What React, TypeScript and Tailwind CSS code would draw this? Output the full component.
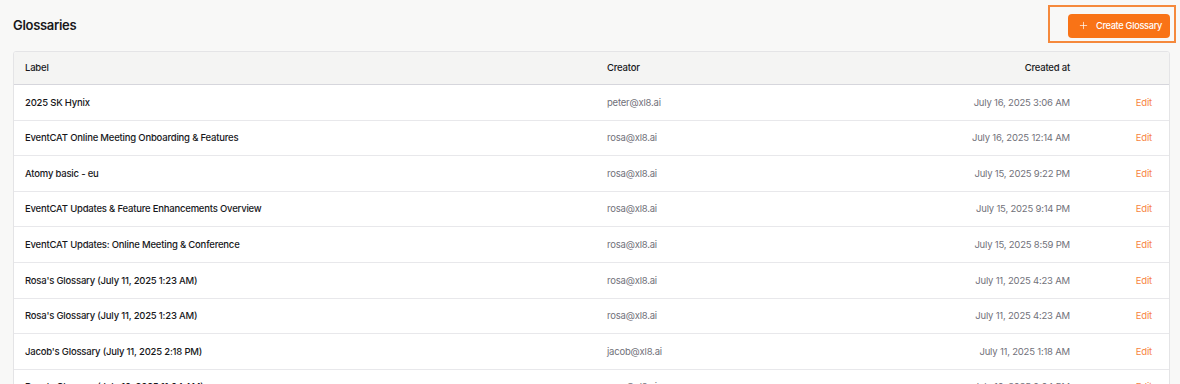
import { Plus } from "lucide-react";

interface Glossary {
  label: string;
  creator: string;
  createdAt: string;
}

const ROWS: Glossary[] = [
  { label: "2025 SK Hynix", creator: "peter@xl8.ai", createdAt: "July 16, 2025 3:06 AM" },
  { label: "EventCAT Online Meeting Onboarding & Features", creator: "rosa@xl8.ai", createdAt: "July 16, 2025 12:14 AM" },
  { label: "Atomy basic - eu", creator: "rosa@xl8.ai", createdAt: "July 15, 2025 9:22 PM" },
  { label: "EventCAT Updates & Feature Enhancements Overview", creator: "rosa@xl8.ai", createdAt: "July 15, 2025 9:14 PM" },
  { label: "EventCAT Updates: Online Meeting & Conference", creator: "rosa@xl8.ai", createdAt: "July 15, 2025 8:59 PM" },
  { label: "Rosa's Glossary (July 11, 2025 1:23 AM)", creator: "rosa@xl8.ai", createdAt: "July 11, 2025 4:23 AM" },
  { label: "Rosa's Glossary (July 11, 2025 1:23 AM)", creator: "rosa@xl8.ai", createdAt: "July 11, 2025 4:23 AM" },
  { label: "Jacob's Glossary (July 11, 2025 2:18 PM)", creator: "jacob@xl8.ai", createdAt: "July 11, 2025 1:18 AM" },
  { label: "Rosa's Glossary (July 10, 2025 11:04 AM)", creator: "rosa@xl8.ai", createdAt: "July 10, 2025 9:04 PM" },
];

export default function App() {
  return (
    <div className="h-[384px] w-[1180px] overflow-hidden bg-[#f8f8f7] font-['Inter','Liberation_Sans',sans-serif] text-[#18181b]">
      <div className="relative flex h-[51px] items-center justify-between pl-[13px] pr-[10px]">
        <h1 className="text-[13px] font-semibold tracking-[-0.3px]">Glossaries</h1>
        <button className="flex h-[24px] w-[102px] items-center gap-[7px] whitespace-nowrap rounded-[4px] bg-[#f97316] pl-[10px] text-[9.2px] font-medium tracking-[-0.3px] text-white">
          <Plus className="h-[11px] w-[11px]" strokeWidth={1.5} />
          Create Glossary
        </button>
        {/* highlight outline */}
        <div className="pointer-events-none absolute left-[1048px] top-[5px] h-[38px] w-[128px] border-2 border-[#f5893c]" />
      </div>

      <div className="ml-[13px] mr-[10px] overflow-hidden rounded-t-[3px] border border-[#e4e4e6] bg-white text-[9.5px] tracking-[-0.2px]">
        <div className="grid h-[33px] grid-cols-[582px_1fr_88px] items-center border-b border-[#d6d6dc] bg-[#f4f4f3] font-medium">
          <span className="pl-[11px]">Label</span>
          <div className="flex justify-between px-[11px]">
            <span>Creator</span>
            <span>Created at</span>
          </div>
          <div />
        </div>
        {ROWS.map((row, i) => (
          <div
            key={i}
            className="grid h-[35.6px] grid-cols-[582px_1fr_88px] items-center border-b border-[#e8e8eb] pt-px"
          >
            <div className="truncate pl-[11px] font-medium text-[#18181b]">{row.label}</div>
            <div className="flex items-center justify-between px-[11px] text-[#71717a]">
              <span>{row.creator}</span>
              <span>{row.createdAt}</span>
            </div>
            <div className="pr-[17px] text-right text-[#f7843f]">Edit</div>
          </div>
        ))}
      </div>
    </div>
  );
}
